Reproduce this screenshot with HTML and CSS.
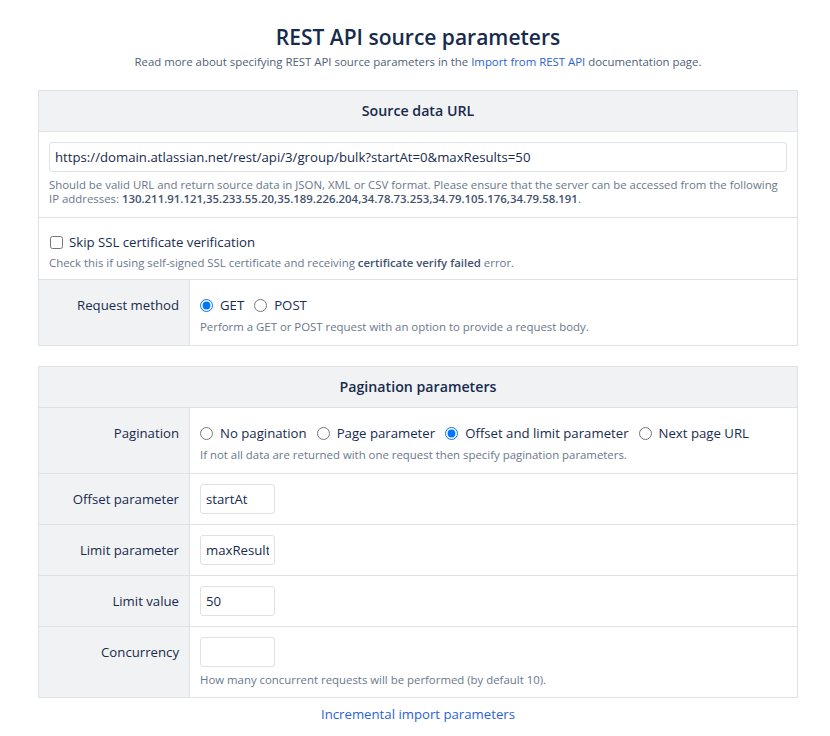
FILE: index.html
```html
<!DOCTYPE html>
<html>
<head>
<meta charset="utf-8">
<link rel="stylesheet" href="styles.css">
</head>
<body>
<div class="page">
  <h1 class="title">REST API source parameters</h1>
  <p class="subtitle">Read more about specifying REST API source parameters in the <a class="link" href="#">Import from REST API</a> documentation page.</p>

  <table class="params">
    <tr><th class="section-head" colspan="2">Source data URL</th></tr>
    <tr>
      <td class="full url-cell" colspan="2">
        <input class="text-input wide" type="text" value="https://domain.atlassian.net/rest/api/3/group/bulk?startAt=0&amp;maxResults=50">
        <div class="help">Should be valid URL and return source data in JSON, XML or CSV format. Please ensure that the server can be accessed from the following IP addresses: <b>130.211.91.121,35.233.55.20,35.189.226.204,34.78.73.253,34.79.105.176,34.79.58.191</b>.</div>
      </td>
    </tr>
    <tr>
      <td class="full check-cell" colspan="2">
        <label class="check"><input type="checkbox"> Skip SSL certificate verification</label>
        <div class="help help-tight">Check this if using self-signed SSL certificate and receiving <b>certificate verify failed</b> error.</div>
      </td>
    </tr>
    <tr>
      <td class="label">Request method</td>
      <td class="value radio-cell">
        <div class="radios">
          <label class="radio"><input type="radio" name="m" checked> GET</label>
          <label class="radio"><input type="radio" name="m"> POST</label>
        </div>
        <div class="help help-radio">Perform a GET or POST request with an option to provide a request body.</div>
      </td>
    </tr>
  </table>

  <table class="params">
    <tr><th class="section-head" colspan="2">Pagination parameters</th></tr>
    <tr>
      <td class="label">Pagination</td>
      <td class="value radio-cell">
        <div class="radios">
          <label class="radio"><input type="radio" name="p"> No pagination</label>
          <label class="radio"><input type="radio" name="p"> Page parameter</label>
          <label class="radio"><input type="radio" name="p" checked> Offset and limit parameter</label>
          <label class="radio"><input type="radio" name="p"> Next page URL</label>
        </div>
        <div class="help help-radio">If not all data are returned with one request then specify pagination parameters.</div>
      </td>
    </tr>
    <tr>
      <td class="label">Offset parameter</td>
      <td class="value"><input class="text-input small" type="text" value="startAt"></td>
    </tr>
    <tr>
      <td class="label">Limit parameter</td>
      <td class="value"><input class="text-input small" type="text" value="maxResults"></td>
    </tr>
    <tr>
      <td class="label">Limit value</td>
      <td class="value"><input class="text-input small" type="text" value="50"></td>
    </tr>
    <tr>
      <td class="label">Concurrency</td>
      <td class="value">
        <input class="text-input small" type="text" value="">
        <div class="help">How many concurrent requests will be performed (by default 10).</div>
      </td>
    </tr>
  </table>

  <div class="footer-link"><a class="link" href="#">Incremental import parameters</a></div>
</div>
</body>
</html>
```

FILE: styles.css
```css
html, body {
  margin: 0;
  padding: 0;
  background: #ffffff;
}
body {
  font-family: "Open Sans", "Noto Sans", sans-serif;
  color: #172b4d;
  font-size: 13.2px;
}
.page {
  width: 760px;
  margin: 0 0 0 38px;
  padding: 22px 0 0;
}
.title {
  margin: 0;
  text-align: center;
  font-size: 21px;
  font-weight: 600;
  line-height: 30px;
  color: #172b4d;
}
.subtitle {
  margin: 2px 0 0;
  text-align: center;
  font-size: 11.4px;
  line-height: 16px;
  color: #505f79;
}
.link {
  color: #2a62d8;
  text-decoration: none;
}
.params {
  width: 760px;
  border-collapse: collapse;
  margin-top: 20px;
}
.params td, .params th {
  border: 1px solid #dfe1e6;
}
.section-head {
  background: #f1f2f4;
  font-size: 14.2px;
  font-weight: 600;
  line-height: 20px;
  padding: 10px;
  text-align: center;
}
.full {
  padding: 10px;
}
.url-cell {
  padding: 10px 10px 11px;
}
.check-cell {
  padding: 13px 10px 9px;
}
.label {
  width: 130px;
  background: #f1f2f4;
  text-align: right;
  padding: 10px 10px 10px;
  vertical-align: top;
  line-height: 30px;
  white-space: nowrap;
}
.value {
  padding: 10px;
  vertical-align: top;
}
.radio-cell {
  padding: 10px 10px 11px;
}
.text-input {
  font-family: inherit;
  font-size: 13.2px;
  color: #172b4d;
  height: 30px;
  box-sizing: border-box;
  border: 1px solid #dfe1e6;
  border-radius: 3px;
  padding: 0 5px;
  outline: none;
  display: block;
}
.wide {
  width: 100%;
}
.small {
  width: 75px;
}
.help {
  font-size: 11.4px;
  line-height: 14px;
  color: #6b778c;
  margin-top: 6px;
}
.help b {
  font-weight: 600;
  color: #42526e;
}
.help-tight {
  margin-top: 3px;
}
.help-radio {
  margin-top: 0;
}
.check {
  display: flex;
  align-items: center;
  line-height: 22px;
}
.check input {
  margin: 0 6px 0 1px;
  width: 13px;
  height: 13px;
}
.radios {
  display: flex;
  gap: 10px;
  line-height: 30px;
}
.radio {
  display: flex;
  align-items: center;
}
.radio input {
  margin: 0 7px 0 0;
  width: 13px;
  height: 13px;
}
.footer-link {
  text-align: center;
  margin-top: 6px;
  font-size: 13.2px;
  line-height: 20px;
}
```
